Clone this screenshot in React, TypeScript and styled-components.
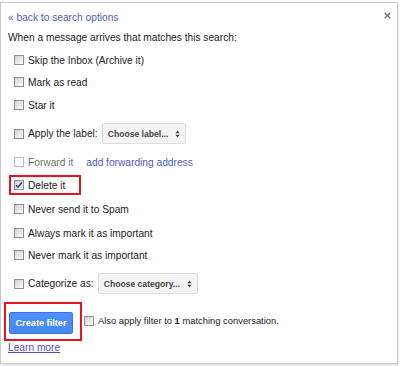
import React from "react";
import styled, { createGlobalStyle } from "styled-components";

const Global = createGlobalStyle`
  html, body { margin: 0; padding: 0; background: #ffffff; }
  body { font-family: "Liberation Sans", Arial, sans-serif; color: #222; }
`;

const Page = styled.div`
  width: 400px;
  height: 366px;
  padding-top: 2px;
  box-sizing: border-box;
`;

const Panel = styled.div`
  width: 398px;
  height: 362px;
  box-sizing: border-box;
  border: 1px solid #c9c9c9;
  box-shadow: 0 1px 2px rgba(0, 0, 0, 0.18);
  background: #fff;
  padding: 6px 6px 0 7px;
  display: flex;
  flex-direction: column;
  font-size: 10.2px;
`;

const Header = styled.div`
  height: 16px;
  display: flex;
  align-items: center;
  justify-content: space-between;
`;

const Link = styled.a<{ $underline?: boolean; $color?: string }>`
  color: ${(p) => p.$color || "#4a5fc1"};
  text-decoration: ${(p) => (p.$underline ? "underline" : "none")};
  cursor: pointer;
  white-space: nowrap;
`;

const Close = styled.svg`
  width: 7px;
  height: 7px;
  margin-top: -4px;
`;

const Row = styled.div<{ $mt: number; $h?: number; $indent?: number }>`
  margin-top: ${(p) => p.$mt}px;
  height: ${(p) => p.$h ?? 16}px;
  padding-left: ${(p) => p.$indent ?? 6}px;
  display: flex;
  align-items: center;
  white-space: nowrap;
`;

const Highlight = styled.div<{ $mt: number }>`
  margin-top: ${(p) => p.$mt}px;
  margin-left: 1px;
  width: 72px;
  height: 20px;
  box-sizing: border-box;
  border: 2px solid #e8141b;
  padding-left: 3px;
  display: flex;
  align-items: center;
`;

const Box = styled.span<{ $disabled?: boolean }>`
  width: 10px;
  height: 10px;
  box-sizing: border-box;
  flex: none;
  border: 1px solid ${(p) => (p.$disabled ? "#b9b9b9" : "#8f8f8f")};
  background: ${(p) =>
    p.$disabled ? "#ffffff" : "linear-gradient(135deg, #d2d2d2 0%, #f0f0f0 75%, #ffffff 100%)"};
  margin-right: 4px;
  display: flex;
  align-items: center;
  justify-content: center;
`;

const Label = styled.span<{ $muted?: boolean; $size?: number }>`
  color: ${(p) => (p.$muted ? "#6f6f6f" : "#222")};
  font-size: ${(p) => (p.$size ? `${p.$size}px` : "inherit")};
`;

const Select = styled.div<{ $w: number; $ml: number }>`
  width: ${(p) => p.$w}px;
  height: 21px;
  margin-left: ${(p) => p.$ml}px;
  box-sizing: border-box;
  border: 1px solid #dcdcdc;
  border-radius: 2px;
  background: #f4f4f4;
  display: flex;
  align-items: center;
  justify-content: space-between;
  padding: 0 5px;
  font-weight: bold;
  font-size: 8.6px;
  color: #444;
`;

const Arrows = styled.svg`
  width: 5px;
  height: 8px;
`;

const Bottom = styled.div`
  margin-top: 8px;
  display: flex;
  align-items: center;
`;

const ButtonFrame = styled.div`
  margin-left: -4px;
  width: 78px;
  height: 39px;
  box-sizing: border-box;
  border: 2px solid #e8141b;
  padding: 8px 0 0 3px;
`;

const Button = styled.button`
  width: 64px;
  height: 22px;
  box-sizing: border-box;
  border: 1px solid #3079ed;
  border-radius: 2px;
  background: linear-gradient(#4d90fe, #4787ed);
  color: #fff;
  font-family: "Liberation Sans", Arial, sans-serif;
  font-weight: bold;
  font-size: 9.2px;
  padding: 0;
`;

const Also = styled.div`
  margin-left: 2px;
  margin-top: -2px;
  display: flex;
  align-items: center;
`;

const Footer = styled.div`
  margin-top: 0;
  height: 12px;
  display: flex;
  align-items: center;
`;

const Check = () => (
  <svg width="8" height="8" viewBox="0 0 8 8">
    <path d="M1 4.2 L3 6.3 L7 1.2" fill="none" stroke="#2b3a8a" strokeWidth="1.4" />
  </svg>
);

const UpDown = () => (
  <Arrows viewBox="0 0 5 8">
    <path d="M2.5 0.5 L4.6 3.2 H0.4 Z M2.5 7.5 L4.6 4.8 H0.4 Z" fill="#444" />
  </Arrows>
);

type Opt = { text: string; mt: number };
const simple1: Opt[] = [
  { text: "Skip the Inbox (Archive it)", mt: 7 },
  { text: "Mark as read", mt: 6 },
  { text: "Star it", mt: 7 },
];
const simple2: Opt[] = [
  { text: "Never send it to Spam", mt: 6 },
  { text: "Always mark it as important", mt: 8 },
  { text: "Never mark it as important", mt: 6 },
];

export default function App() {
  return (
    <Page>
      <Global />
      <Panel>
        <Header>
          <Link>« back to search options</Link>
          <Close viewBox="0 0 7 7">
            <path d="M0.7 0.7 L6.3 6.3 M6.3 0.7 L0.7 6.3" stroke="#777" strokeWidth="1.4" />
          </Close>
        </Header>
        <Row $mt={4} $indent={0}>
          When a message arrives that matches this search:
        </Row>
        {simple1.map((o) => (
          <Row key={o.text} $mt={o.mt}>
            <Box />
            <Label>{o.text}</Label>
          </Row>
        ))}
        <Row $mt={10} $h={21}>
          <Box />
          <Label>Apply the label:</Label>
          <Select $w={84} $ml={4}>
            <span>Choose label...</span>
            <UpDown />
          </Select>
        </Row>
        <Row $mt={10}>
          <Box $disabled />
          <Label $muted>Forward it</Label>
          <Link style={{ marginLeft: 13 }}>add forwarding address</Link>
        </Row>
        <Highlight $mt={5}>
          <Box>
            <Check />
          </Box>
          <Label>Delete it</Label>
        </Highlight>
        {simple2.map((o) => (
          <Row key={o.text} $mt={o.mt}>
            <Box />
            <Label>{o.text}</Label>
          </Row>
        ))}
        <Row $mt={10} $h={21}>
          <Box />
          <Label>Categorize as:</Label>
          <Select $w={100} $ml={4}>
            <span>Choose category...</span>
            <UpDown />
          </Select>
        </Row>
        <Bottom>
          <ButtonFrame>
            <Button>Create filter</Button>
          </ButtonFrame>
          <Also>
            <Box />
            <Label $size={9.4}>
              Also apply filter to <b>1</b> matching conversation.
            </Label>
          </Also>
        </Bottom>
        <Footer>
          <Link $underline $color="#5549cc">Learn more</Link>
        </Footer>
      </Panel>
    </Page>
  );
}
